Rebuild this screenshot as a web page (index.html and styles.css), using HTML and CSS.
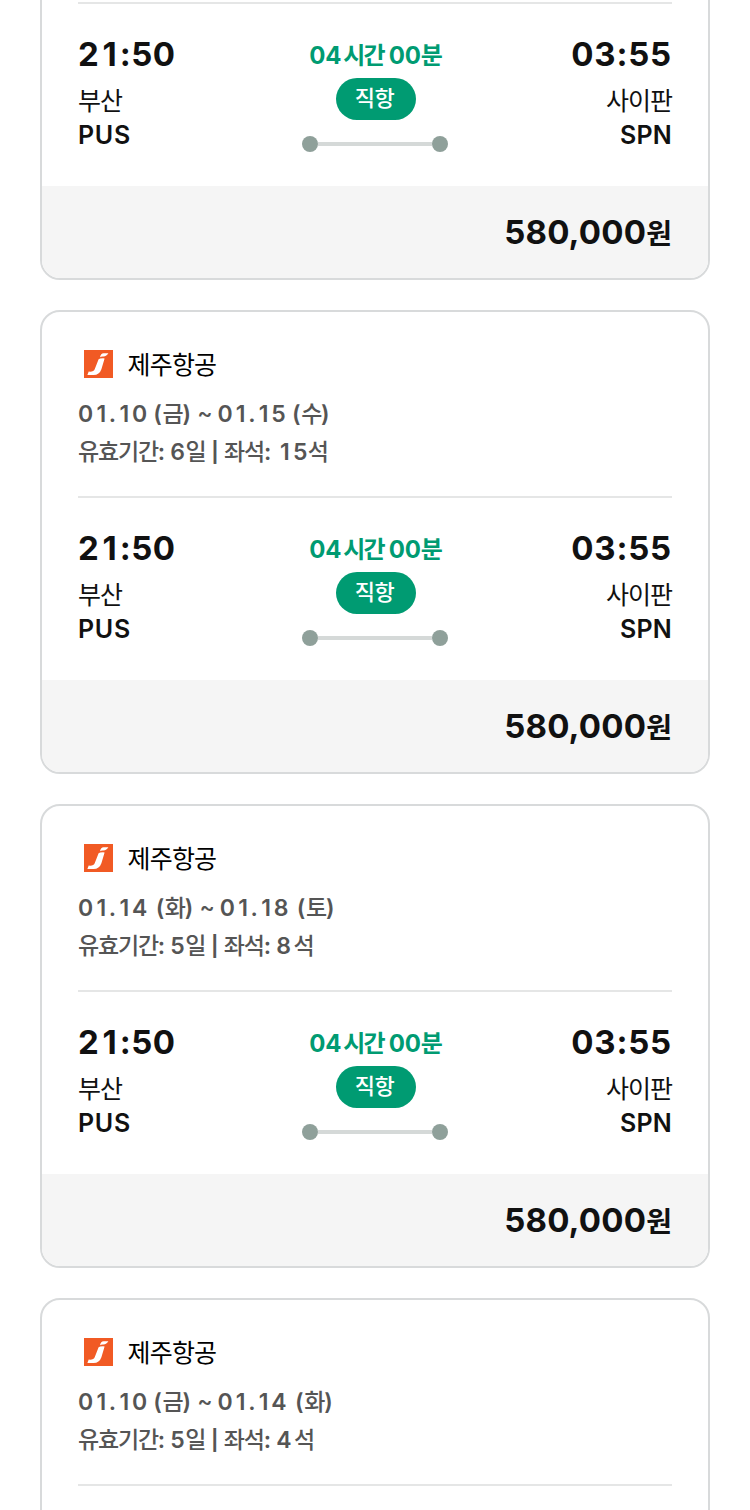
FILE: index.html
```html
<!DOCTYPE html>
<html lang="ko">
<head>
<meta charset="utf-8">
<title>항공권</title>
<link rel="stylesheet" href="styles.css">
</head>
<body>
<main class="list" id="list"></main>
<script src="app.js"></script>
</body>
</html>
```
FILE: styles.css
```css
* { box-sizing: border-box; }
html, body { height: 1510px; margin: 0; overflow: hidden; }
body {
  background: #fff;
  color: #111;
  font-family: Inter, "Noto Sans CJK KR", sans-serif;
}
.list { display: flex; flex-direction: column; gap: 30px; margin: -184px 40px 0; white-space: pre; }
.card {
  height: 464px;
  flex: none;
  border: 2px solid #d8dadb;
  border-radius: 20px;
  overflow: hidden;
  display: flex;
  flex-direction: column;
}
.ko { font-family: "Noto Sans CJK KR", sans-serif; font-weight: 400; line-height: 1; }
.one { display: inline-block; width: .66em; text-align: center; letter-spacing: 0; }
.wide { margin-right: 2.2px; }
.tilde { margin: 0 -1.5px 0 0; font-weight: 500; position: relative; top: -1px; }
.bar { font-size: 20px; font-weight: 700; position: relative; top: -1px; margin: 0 .2px 0 1px; }
.head { margin: 0 36px; height: 186px; padding-top: 33px; border-bottom: 2px solid #e5e6e6; }
.airline { display: flex; align-items: center; height: 36px; padding: 0 0 0 6px; gap: 14.5px; font-size: 25px; color: #000; }
.airline .ko { letter-spacing: -.8px; }
.logo { width: 29px; height: 28px; display: block; margin-top: 2px; }
.meta { font-size: 23px; height: 38px; line-height: 38px; font-weight: 600; color: #555; letter-spacing: .3px; word-spacing: -1.2px; }
.dates { margin-top: 14px; letter-spacing: .5px; word-spacing: -.5px; }
.meta .ko { font-weight: 500; font-size: 23px; letter-spacing: -1.2px; }
.info .one { width: .72em; }
.route { flex: 1; margin: 0 36px; display: grid; grid-template-columns: 1fr 150px 1fr; padding-top: 29px; }
.time { font-size: 33px; line-height: 42px; font-weight: 700; letter-spacing: .8px; }
.start .time { letter-spacing: .5px; }
.time .one { width: .62em; }
.city { font-size: 25px; line-height: 36px; margin-top: 8px; }
.city .ko { letter-spacing: -1px; }
.code { font-size: 25px; line-height: 34px; margin-top: -1px; font-weight: 600; letter-spacing: .7px; }
.end { text-align: right; }
.end .code { letter-spacing: .2px; }
.mid { display: flex; flex-direction: column; align-items: center; }
.duration { font-size: 24px; height: 30px; line-height: 30px; margin-top: 8px; font-weight: 700; color: #009b72; letter-spacing: -.3px; }
.duration .ko { font-weight: 700; font-size: 24px; letter-spacing: -2px; }
.badge { width: 80px; height: 42px; margin: 7px 0 0 2px; padding-right: 3px; border-radius: 21px; background: #009b72; color: #fff; font-size: 22px; line-height: 40px; text-align: center; }
.badge .ko { letter-spacing: -.5px; font-weight: 500; }
.track { width: 146px; height: 16px; margin-top: 16px; display: flex; align-items: center; }
.dot { width: 16px; height: 16px; border-radius: 50%; background: #8fa09a; }
.line { flex: 1; height: 4px; background: #d5d9d8; }
.price { height: 92px; background: #f5f5f5; padding: 0 36px; text-align: right; font-size: 33px; line-height: 92px; font-weight: 700; letter-spacing: .2px; }
.price .ko { font-weight: 700; font-size: 28px; letter-spacing: 0; }
```
FILE: app.js
```js
const flights = [
  { dates: "01.10 (금) ~ 01.14 (화)", info: "유효기간: 5일 | 좌석: 4석" },
  { dates: "01.10 (금) ~ 01.15 (수)", info: "유효기간: 6일 | 좌석: 15석" },
  { dates: "01.14 (화) ~ 01.18 (토)", info: "유효기간: 5일 | 좌석: 8석" },
  { dates: "01.10 (금) ~ 01.14 (화)", info: "유효기간: 5일 | 좌석: 4석" }
];
const runs = t => t
  .replace(/1/g, '<span class="one">1</span>')
  .replace(/4|8(?!0)/g, '<span class="wide">$&</span>')
  .replace("~", '<span class="tilde">~</span>')
  .replace("|", '<span class="bar">|</span>')
  .replace(/[가-힣]+/g, '<span class="ko">$&</span>');
const logo = '<svg class="logo" viewBox="0 0 29 28"><rect width="29" height="28" fill="#f15a24"/><path d="M16 7.2Q16.8 3.5 19.6 3.3H24.4Q22.6 6.6 19 6.4Q17 6.3 16 7.2ZM14.6 9.2Q15.6 8.2 20.6 8.4L17.4 19.2Q15.4 25 9.5 25H3.4L4.7 21.6Q9.6 22.2 10.8 19Z" fill="#fff"/></svg>';
document.getElementById("list").innerHTML = flights.map(f =>
  '<article class="card"><header class="head">' +
  `<div class="airline">${logo}${runs("제주항공")}</div>` +
  `<div class="meta dates">${runs(f.dates)}</div><div class="meta info">${runs(f.info)}</div></header>` +
  `<section class="route"><div class="start"><div class="time">${runs("21:50")}</div><div class="city">${runs("부산")}</div><div class="code">PUS</div></div>` +
  `<div class="mid"><div class="duration">${runs("04시간 00분")}</div><div class="badge">${runs("직항")}</div>` +
  '<div class="track"><i class="dot"></i><i class="line"></i><i class="dot"></i></div></div>' +
  `<div class="end"><div class="time">03:55</div><div class="city">${runs("사이판")}</div><div class="code">SPN</div></div></section>` +
  `<footer class="price">${runs("580,000원")}</footer></article>`
).join("");
```
